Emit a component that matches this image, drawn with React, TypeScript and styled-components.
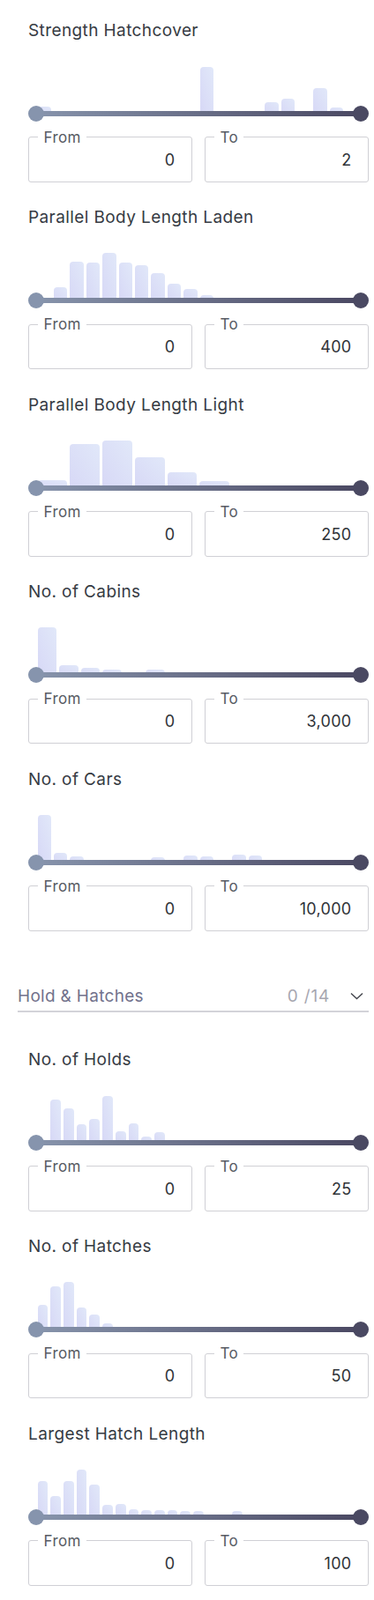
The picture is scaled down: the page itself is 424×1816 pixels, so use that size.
import React from "react";
import styled, { createGlobalStyle } from "styled-components";

const GlobalStyle = createGlobalStyle`
  * { box-sizing: border-box; }
  body {
    margin: 0;
    background: #fff;
    font-family: Inter, "Noto Sans", sans-serif;
  }
`;

const Page = styled.div`
  padding: 0 6px 0 20px;
`;

const Section = styled.section`
  padding: 22.5px 0 6px 12px;
`;

const Title = styled.h3`
  margin: 0;
  font-size: 19px;
  line-height: 24px;
  font-weight: 400;
  letter-spacing: 0.4px;
  color: #363b43;
`;

const Chart = styled.div`
  margin-top: 30px;
  padding: 0 9px;
`;

const Bars = styled.div`
  height: 52px;
  display: flex;
  align-items: flex-end;
`;

const Bin = styled.div`
  flex: 1;
  padding: 0 1.5px;
`;

const Bar = styled.div`
  border-radius: 4px 4px 0 0;
  background: linear-gradient(to top right, #d7d8f6, #e1e8f9);
`;

const Track = styled.div`
  position: relative;
  height: 6px;
  margin-top: -3px;
  border-radius: 3px;
  background: linear-gradient(to right, #8794ac, #4a4862);
`;

const Thumb = styled.span<{ $side: "left" | "right" }>`
  position: absolute;
  top: -6px;
  ${(p) => p.$side}: -9px;
  width: 18px;
  height: 18px;
  border-radius: 50%;
  background: ${(p) => (p.$side === "left" ? "#8694ad" : "#4a4962")};
`;

const Fields = styled.div`
  display: grid;
  grid-template-columns: 1fr 1fr;
  gap: 14px;
  margin-top: 14px;
`;

const Field = styled.fieldset`
  margin: 0;
  min-width: 0;
  padding: 4px 18.5px 12px 9.5px;
  border: 1.5px solid #d0d0d5;
  border-radius: 3px;
`;

const Legend = styled.legend`
  padding: 0 6px 0 7px;
  font-size: 17px;
  line-height: 20px;
  letter-spacing: 0.4px;
  color: #575b63;
`;

const Value = styled.input`
  display: block;
  width: 100%;
  height: 24px;
  margin: 0;
  padding: 0;
  border: none;
  outline: none;
  background: transparent;
  font-family: inherit;
  font-size: 18px;
  line-height: 24px;
  letter-spacing: 0.3px;
  text-align: right;
  color: #2f3338;
`;

const GroupHeader = styled.div`
  display: flex;
  align-items: center;
  height: 34px;
  margin: 52px 0 19.5px;
  padding-right: 6px;
  border-bottom: 2px solid #d3d3d9;
  font-size: 19px;
  letter-spacing: 0.3px;
  cursor: pointer;
`;

const GroupName = styled.span`
  flex: 1;
  color: #72728c;
`;

const GroupCount = styled.span`
  margin-right: 23px;
  letter-spacing: 0.8px;
  color: #a7a7b1;
`;

const Chevron = () => (
  <svg width="15" height="9" viewBox="0 0 15 9" fill="none">
    <polyline points="1,1.5 7.5,7.5 14,1.5" stroke="#44464d" strokeWidth="1.4" />
  </svg>
);

type Filter = { label: string; bins: number; bars: Record<number, number>; to: string };

const before: Filter[] = [
  { label: "Strength Hatchcover", bins: 20, bars: { 0: 5, 10: 50, 14: 10, 15: 14, 17: 26, 18: 4 }, to: "2" },
  {
    label: "Parallel Body Length Laden",
    bins: 20,
    bars: { 1: 12, 2: 41, 3: 40, 4: 51, 5: 40, 6: 37, 7: 28, 8: 16, 9: 10, 10: 3 },
    to: "400",
  },
  { label: "Parallel Body Length Light", bins: 10, bars: { 0: 6, 1: 47, 2: 51, 3: 32, 4: 15, 5: 5 }, to: "250" },
  { label: "No. of Cabins", bins: 15, bars: { 0: 51, 1: 8, 2: 5, 3: 3, 5: 3 }, to: "3,000" },
  {
    label: "No. of Cars",
    bins: 20,
    bars: { 0: 51, 1: 8, 2: 4, 7: 3, 9: 5, 10: 4, 12: 6, 13: 5 },
    to: "10,000",
  },
];

const holds: Filter[] = [
  {
    label: "No. of Holds",
    bins: 25,
    bars: { 1: 46, 2: 36, 3: 18, 4: 24, 5: 50, 6: 10, 7: 19, 8: 4, 9: 9 },
    to: "25",
  },
  { label: "No. of Hatches", bins: 25, bars: { 0: 25, 1: 46, 2: 51, 3: 22, 4: 14, 5: 4 }, to: "50" },
  {
    label: "Largest Hatch Length",
    bins: 25,
    bars: { 0: 38, 1: 21, 2: 38, 3: 51, 4: 34, 5: 11, 6: 12, 7: 6, 8: 5, 9: 5, 10: 5, 11: 4, 12: 4, 15: 4 },
    to: "100",
  },
];

const RangeFilter = ({ f }: { f: Filter }) => (
  <Section>
    <Title>{f.label}</Title>
    <Chart>
      <Bars>
        {Array.from({ length: f.bins }, (_, i) => (
          <Bin key={i}>{f.bars[i] ? <Bar style={{ height: f.bars[i] + 3 }} /> : null}</Bin>
        ))}
      </Bars>
      <Track>
        <Thumb $side="left" />
        <Thumb $side="right" />
      </Track>
    </Chart>
    <Fields>
      <Field>
        <Legend>From</Legend>
        <Value readOnly value="0" />
      </Field>
      <Field>
        <Legend>To</Legend>
        <Value readOnly value={f.to} />
      </Field>
    </Fields>
  </Section>
);

export default function App() {
  return (
    <Page>
      <GlobalStyle />
      {before.map((f) => (
        <RangeFilter key={f.label} f={f} />
      ))}
      <GroupHeader>
        <GroupName>Hold &amp; Hatches</GroupName>
        <GroupCount>0 /14</GroupCount>
        <Chevron />
      </GroupHeader>
      {holds.map((f) => (
        <RangeFilter key={f.label} f={f} />
      ))}
    </Page>
  );
}
